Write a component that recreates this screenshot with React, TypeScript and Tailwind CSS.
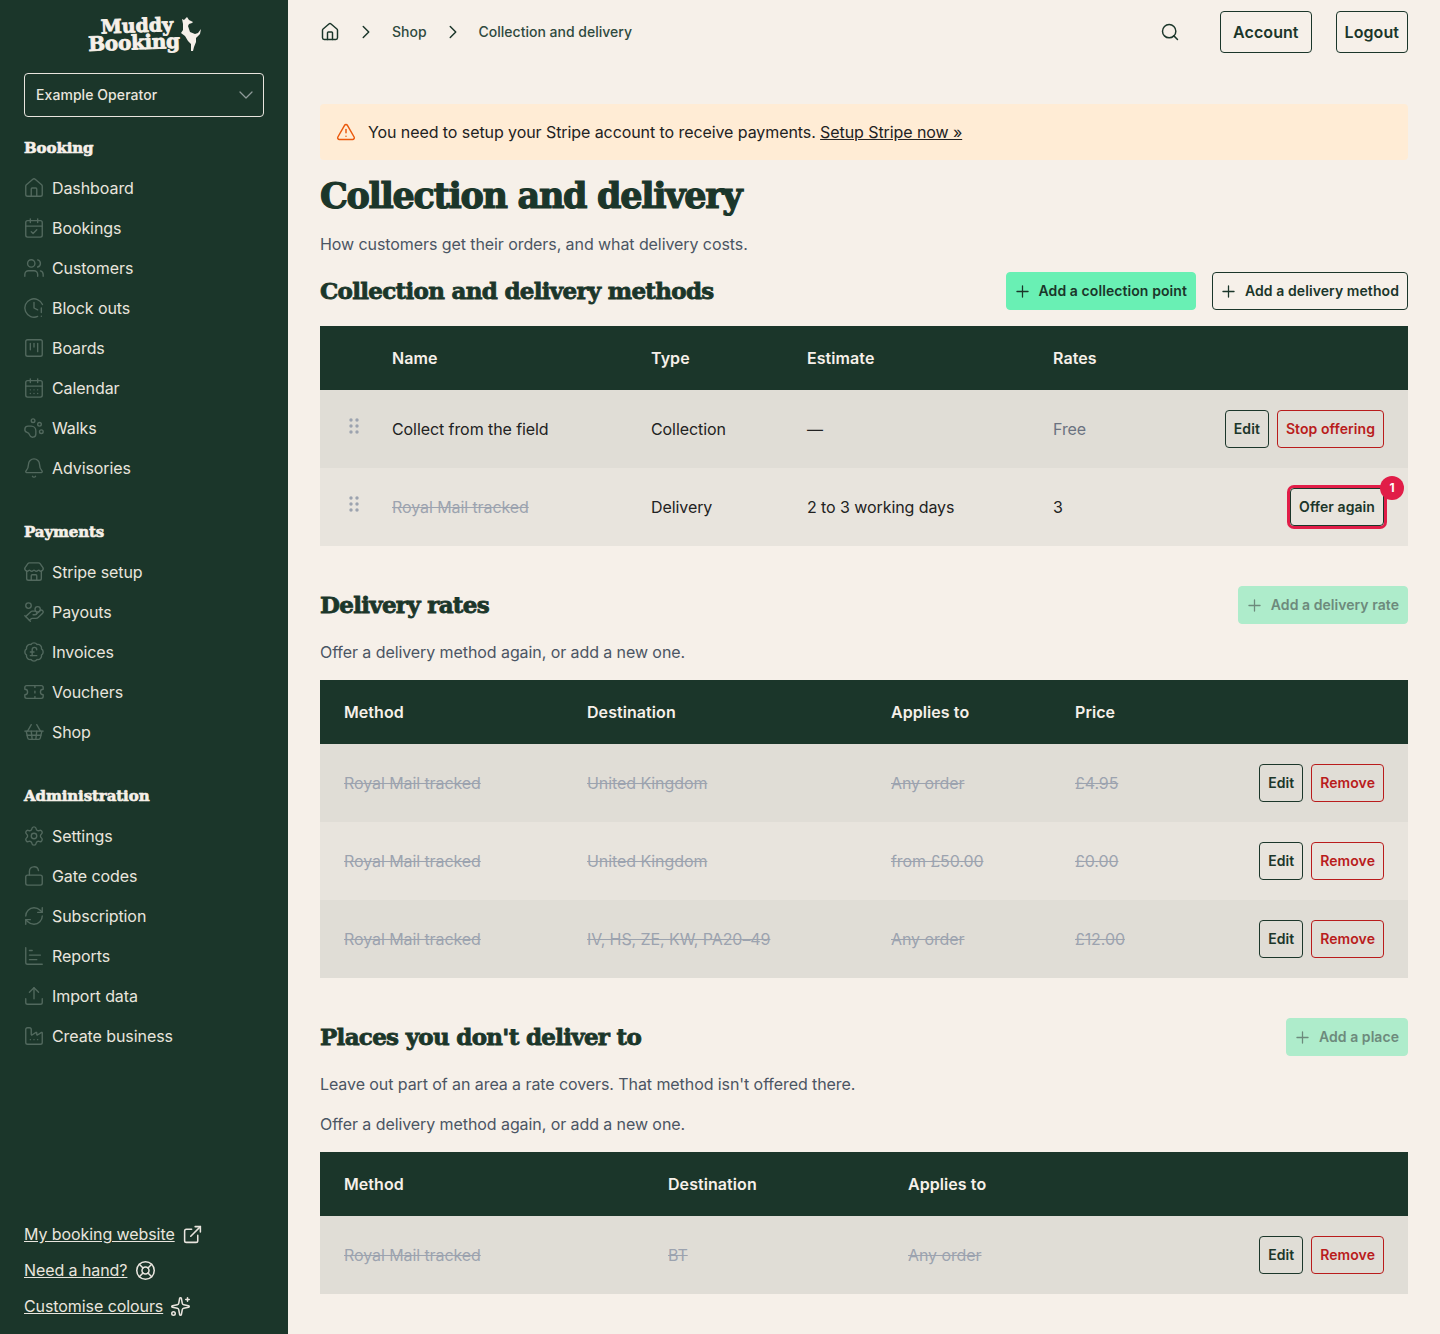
import React from 'react';
import {
  Home, CalendarCheck, Users, ClockAlert, SquareKanban, CalendarDays, PawPrint, Bell, Store, HandCoins,
  BadgePoundSterling, Ticket, ShoppingBasket, Settings, LockOpen, RefreshCw, ChartBar, Upload, Factory,
  ExternalLink, LifeBuoy, Sparkles, Search, ChevronRight, ChevronDown, TriangleAlert, Plus,
} from 'lucide-react';

const heavy = "font-['DejaVu_Serif',serif] font-bold";
const h2cls = `${heavy} text-[23px] tracking-[-0.7px] [-webkit-text-stroke:0.8px_currentColor] text-[#1b362a]`;

const NavItem = ({ icon: Icon, label }: { icon: any; label: string }) => (
  <a className="flex items-center h-10 gap-[7px] text-[#e9e5de] text-base">
    <Icon className="w-[22px] h-[22px] -ml-px text-[#52695e]" strokeWidth={1.5} />
    <span>{label}</span>
  </a>
);

const Section = ({ title, items, className = '' }: { title: string; items: [any, string][]; className?: string }) => (
  <div className={className}>
    <h3 className={`${heavy} text-[#f6f0e9] text-[15px] tracking-[-0.1px] [-webkit-text-stroke:0.6px_currentColor] leading-5 mb-[10px]`}>{title}</h3>
    <div>{items.map(([i, l]) => <NavItem key={l} icon={i} label={l} />)}</div>
  </div>
);

const Logo = () => (
  <div className="flex justify-center pt-[16px] h-[73px]">
    <div className="relative w-[114px] h-[38px] ml-[2px]">
      <div className="absolute inset-0 -rotate-2">
        <div className={`${heavy} absolute left-[13px] top-0 text-[19px] leading-[18px] tracking-[0px] [-webkit-text-stroke:0.8px_currentColor] text-[#f6f0e9]`}>Muddy</div>
        <div className={`${heavy} absolute left-0 top-[17px] text-[20px] leading-[18px] tracking-[-0.3px] [-webkit-text-stroke:0.8px_currentColor] text-[#f6f0e9]`}>Booking</div>
      </div>
      <svg viewBox="0 0 24 36" className="absolute right-0 top-0 w-[24px] h-[36px]" fill="#f6f0e9">
        <path d="M4 3l2 1 2-2 1-1 2 3 4 2-1 1-3 1-1 2 2 6 5 2 3-1 3-4-1 5-3 3-1 1 0 4-2 5-1 4-2 0 0-7-3-3-3-5-4-3 2-3 0-6z" />
      </svg>
    </div>
  </div>
);

const Btn = ({ children, red, className = '' }: { children: React.ReactNode; red?: boolean; className?: string }) => (
  <button className={`h-[38px] px-2 rounded border text-sm font-semibold tracking-[0.07px] ${red ? 'border-[#b91c1c] text-[#b91c1c]' : 'border-[#1b362a] text-[#1b362a]'} ${className}`}>
    {children}
  </button>
);

const AddBtn = ({ label, variant }: { label: string; variant: 'solid' | 'outline' | 'faded' }) => {
  const cls = variant === 'solid'
    ? 'bg-[#69f0b4] border-[#69f0b4] text-[#1b362a] tracking-[0.08px]'
    : variant === 'outline'
      ? 'border-[#1b362a] text-[#1b362a] tracking-[0.08px]'
      : 'bg-[#aeeccb] border-[#aeeccb] text-[#6d8a7c] tracking-[0.05px]';
  return (
    <button className={`h-[38px] pl-1.5 pr-2 rounded border flex items-center gap-[7px] text-sm font-semibold ${cls}`}>
      <Plus className="w-[19px] h-[19px]" strokeWidth={1.6} />
      {label}
    </button>
  );
};

const Th = ({ children, className = '' }: { children?: React.ReactNode; className?: string }) => (
  <th className={`h-16 px-6 text-left font-semibold text-base tracking-[0.07px] text-[#f6f0e9] ${className}`}>{children}</th>
);

const struck = 'line-through text-[#9ca3af]';
const Td = ({ children, className = '' }: { children?: React.ReactNode; className?: string }) => (
  <td className={`h-[78px] px-6 text-base text-[#222] ${className}`}>{children}</td>
);

const Actions = ({ rm = 'Remove' }: { rm?: string }) => (
  <div className="flex justify-end gap-2">
    <Btn>Edit</Btn>
    <Btn red>{rm}</Btn>
  </div>
);

const RateTable = ({ cols, heads, rows }: { cols: number[]; heads: string[]; rows: string[][] }) => (
  <table className="w-full table-fixed border-collapse">
    <colgroup>
      {cols.map((c, i) => <col key={i} style={{ width: c }} />)}
      <col />
    </colgroup>
    <thead className="bg-[#1b362a]">
      <tr>{heads.map(h => <Th key={h}>{h}</Th>)}<Th /></tr>
    </thead>
    <tbody>
      {rows.map((r, i) => (
        <tr key={i} className={i % 2 === 0 ? 'bg-[#e0ddd6]' : 'bg-[#e8e4dd]'}>
          {r.map((c, j) => <Td key={j}><span className={struck}>{c}</span></Td>)}
          <Td><Actions /></Td>
        </tr>
      ))}
    </tbody>
  </table>
);

const Grip = () => (
  <svg viewBox="0 0 10 16" className="w-[10px] h-[16px] ml-[29px] -translate-y-[3px]" fill="#9ca3af">
    <circle cx="2" cy="2" r="1.7" /><circle cx="8" cy="2" r="1.7" />
    <circle cx="2" cy="8" r="1.7" /><circle cx="8" cy="8" r="1.7" />
    <circle cx="2" cy="14" r="1.7" /><circle cx="8" cy="14" r="1.7" />
  </svg>
);

export default function App() {
  return (
    <div className="flex w-[1440px] h-[1334px] bg-[#f6f0e9] font-['Inter',sans-serif] tracking-[-0.08px] overflow-hidden">
      <aside className="w-[288px] shrink-0 bg-[#1b362a] px-6 flex flex-col">
        <Logo />
        <div className="h-11 border border-[#e9e5de] rounded flex items-center justify-between pl-[11px] pr-[5px] text-sm font-medium tracking-[0.07px] text-[#e9e5de]">
          Example Operator
          <ChevronDown className="w-6 h-6 text-[#8f9a99]" strokeWidth={1.25} />
        </div>
        <Section className="mt-[21px]" title="Booking" items={[
          [Home, 'Dashboard'], [CalendarCheck, 'Bookings'], [Users, 'Customers'], [ClockAlert, 'Block outs'],
          [SquareKanban, 'Boards'], [CalendarDays, 'Calendar'], [PawPrint, 'Walks'], [Bell, 'Advisories'],
        ]} />
        <Section className="mt-[34px]" title="Payments" items={[
          [Store, 'Stripe setup'], [HandCoins, 'Payouts'], [BadgePoundSterling, 'Invoices'], [Ticket, 'Vouchers'], [ShoppingBasket, 'Shop'],
        ]} />
        <Section className="mt-[34px]" title="Administration" items={[
          [Settings, 'Settings'], [LockOpen, 'Gate codes'], [RefreshCw, 'Subscription'], [ChartBar, 'Reports'], [Upload, 'Import data'], [Factory, 'Create business'],
        ]} />
        <div className="mt-auto pb-[16px] flex flex-col gap-3 text-base text-[#e9e5de]">
          <a className="flex items-center gap-[7px] h-6"><span className="underline">My booking website</span><ExternalLink className="w-[21px] h-[21px]" strokeWidth={1.75} /></a>
          <a className="flex items-center gap-2 h-6"><span className="underline">Need a hand?</span><LifeBuoy className="w-[21px] h-[21px]" strokeWidth={1.75} /></a>
          <a className="flex items-center gap-[7px] h-6"><span className="underline">Customise colours</span><Sparkles className="w-[21px] h-[21px]" strokeWidth={1.75} /></a>
        </div>
      </aside>

      <main className="flex-1 min-w-0 px-8">
        <header className="h-[64px] pt-[11px] flex items-start justify-between">
          <nav className="flex items-center h-[42px] text-sm font-medium tracking-normal text-[#2f4a3e]">
            <Home className="w-5 h-5 text-[#1b362a]" strokeWidth={1.75} />
            <ChevronRight className="w-[22px] h-[22px] ml-[15px] text-[#1b362a]" strokeWidth={1.6} />
            <span className="ml-[15px]">Shop</span>
            <ChevronRight className="w-[22px] h-[22px] ml-[15px] text-[#1b362a]" strokeWidth={1.6} />
            <span className="ml-[15px]">Collection and delivery</span>
          </nav>
          <div className="flex items-center">
            <Search className="w-5 h-5 text-[#1b362a] mr-10" strokeWidth={1.75} />
            <button className="h-[42px] px-3 rounded border border-[#1b362a] text-base font-semibold tracking-[0.07px] text-[#1b362a]">Account</button>
            <button className="h-[42px] px-2 ml-6 rounded border border-[#1b362a] text-base font-semibold tracking-[0.07px] text-[#1b362a]">Logout</button>
          </div>
        </header>

        <div className="mt-10 h-14 rounded bg-[#ffecd5] flex items-center pl-4 gap-3 text-base text-[#222]">
          <TriangleAlert className="w-5 h-5 text-[#ea580c]" strokeWidth={1.75} />
          <span>You need to setup your Stripe account to receive payments. <a className="underline">Setup Stripe now »</a></span>
        </div>

        <h1 className={`${heavy} mt-[12px] text-[35px] leading-[48px] tracking-[-1.3px] [-webkit-text-stroke:1.2px_currentColor] text-[#1b362a]`}>Collection and delivery</h1>
        <p className="mt-[12px] h-6 leading-6 text-base text-[#4b5563]">How customers get their orders, and what delivery costs.</p>

        <div className="mt-[16px] h-[38px] flex items-center justify-between">
          <h2 className={h2cls}>Collection and delivery methods</h2>
          <div className="flex gap-4">
            <AddBtn variant="solid" label="Add a collection point" />
            <AddBtn variant="outline" label="Add a delivery method" />
          </div>
        </div>

        <table className="mt-4 w-full table-fixed border-collapse">
          <colgroup>
            <col className="w-[48px]" /><col className="w-[259px]" /><col className="w-[156px]" /><col className="w-[246px]" /><col className="w-[120px]" /><col />
          </colgroup>
          <thead className="bg-[#1b362a]">
            <tr><Th /><Th>Name</Th><Th>Type</Th><Th>Estimate</Th><Th>Rates</Th><Th /></tr>
          </thead>
          <tbody>
            <tr className="bg-[#e0ddd6]">
              <td className="h-[78px]"><Grip /></td>
              <Td>Collect from the field</Td><Td>Collection</Td><Td>—</Td><Td className="!text-[#6b7280]">Free</Td>
              <Td><Actions rm="Stop offering" /></Td>
            </tr>
            <tr className="bg-[#e8e4dd]">
              <td className="h-[78px]"><Grip /></td>
              <Td><span className={struck}>Royal Mail tracked</span></Td><Td>Delivery</Td><Td>2 to 3 working days</Td><Td>3</Td>
              <Td>
                <div className="flex justify-end">
                  <div className="relative">
                    <Btn className="ring-[3px] ring-[#e11d48]">Offer again</Btn>
                    <span className="absolute -right-[20px] -top-[12px] w-6 h-6 rounded-full bg-[#e11d48] text-white text-xs font-bold flex items-center justify-center">1</span>
                  </div>
                </div>
              </Td>
            </tr>
          </tbody>
        </table>

        <div className="mt-10 h-[38px] flex items-center justify-between">
          <h2 className={h2cls}>Delivery rates</h2>
          <AddBtn variant="faded" label="Add a delivery rate" />
        </div>
        <p className="mt-[16px] h-6 leading-6 text-base text-[#4b5563]">Offer a delivery method again, or add a new one.</p>
        <div className="mt-4">
          <RateTable cols={[243, 304, 184, 200]} heads={['Method', 'Destination', 'Applies to', 'Price']} rows={[
            ['Royal Mail tracked', 'United Kingdom', 'Any order', '£4.95'],
            ['Royal Mail tracked', 'United Kingdom', 'from £50.00', '£0.00'],
            ['Royal Mail tracked', 'IV, HS, ZE, KW, PA20–49', 'Any order', '£12.00'],
          ]} />
        </div>

        <div className="mt-10 h-[38px] flex items-center justify-between">
          <h2 className={h2cls}>Places you don't deliver to</h2>
          <AddBtn variant="faded" label="Add a place" />
        </div>
        <p className="mt-[16px] h-6 leading-6 text-base text-[#4b5563]">Leave out part of an area a rate covers. That method isn't offered there.</p>
        <p className="mt-4 h-6 leading-6 text-base text-[#4b5563]">Offer a delivery method again, or add a new one.</p>
        <div className="mt-4">
          <RateTable cols={[324, 240, 300]} heads={['Method', 'Destination', 'Applies to']} rows={[
            ['Royal Mail tracked', 'BT', 'Any order'],
          ]} />
        </div>
      </main>
    </div>
  );
}
